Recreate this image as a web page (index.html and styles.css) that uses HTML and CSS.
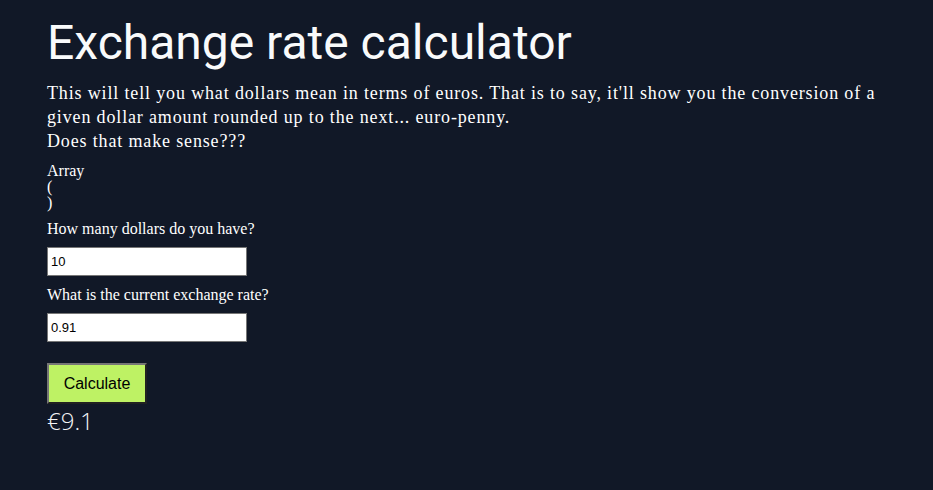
FILE: index.html
```html
<!DOCTYPE html>
<html lang="en">
<head>
<meta charset="utf-8">
<title>Exchange rate calculator</title>
<link rel="stylesheet" href="styles.css">
</head>
<body>
<main class="page">
  <h1 class="title">Exchange rate calculator</h1>
  <p class="intro">This will tell you what dollars mean in terms of euros. That is to say, it'll show you the conversion of a given dollar amount rounded up to the next... euro-penny.<br>Does that make sense???</p>
  <div class="dump">Array<br>(<br>)</div>
  <form class="calc">
    <label class="label" for="dollars">How many dollars do you have?</label>
    <input class="field" id="dollars" type="text" value="10">
    <label class="label label-second" for="rate">What is the current exchange rate?</label>
    <input class="field" id="rate" type="text" value="0.91">
    <button class="btn" type="button">Calculate</button>
  </form>
  <div class="result">€9.1</div>
</main>
</body>
</html>
```
FILE: styles.css
```css
html, body {
  margin: 0;
  padding: 0;
  background: #111827;
  color: #ffffff;
}

.page {
  display: flex;
  flex-direction: column;
  align-items: flex-start;
  padding: 15px 47px 0;
}

.title {
  margin: 0;
  font-family: Roboto, "Liberation Sans", sans-serif;
  font-weight: 400;
  font-size: 48px;
  line-height: 56px;
  color: #f9fafb;
}

.intro {
  margin: 10px 0 0;
  max-width: 840px;
  font-family: "Liberation Serif", serif;
  font-size: 18px;
  line-height: 24px;
  letter-spacing: 0.85px;
}

.dump {
  margin-top: 10px;
  font-family: "Liberation Serif", serif;
  font-size: 16px;
  line-height: 16px;
}

.calc {
  display: flex;
  flex-direction: column;
  align-items: flex-start;
  margin: 0;
}

.label {
  margin-top: 9px;
  font-family: "Liberation Serif", serif;
  font-size: 16px;
  line-height: 18px;
}

.label-second {
  margin-top: 10px;
}

.field {
  box-sizing: border-box;
  width: 200px;
  height: 29px;
  margin: 9px 0 0;
  padding: 0 3px;
  border: 1px solid #767676;
  background: #ffffff;
  color: #000000;
  font-family: "Liberation Sans", Arial, sans-serif;
  font-size: 13px;
}

.btn {
  box-sizing: border-box;
  width: 100px;
  height: 41px;
  margin-top: 21px;
  padding: 0;
  border: 2px outset #767676;
  background: #bef264;
  color: #000000;
  font-family: "Liberation Sans", Arial, sans-serif;
  font-size: 16px;
}

.result {
  margin-top: 3px;
  font-family: "Open Sans", sans-serif;
  font-weight: 300;
  font-size: 24px;
  line-height: 28px;
  color: #f3f4f6;
}
```
